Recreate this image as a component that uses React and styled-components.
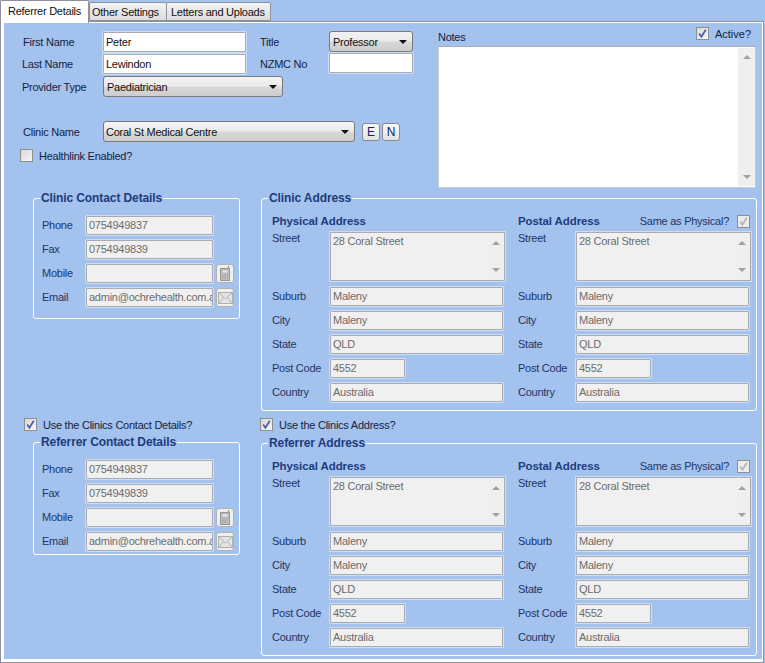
import React from "react";
import styled, { createGlobalStyle, css } from "styled-components";

const Global = createGlobalStyle`
  html, body { margin: 0; padding: 0; background: #a3c2ee; }
  body { width: 765px; height: 663px; overflow: hidden; font: 11px/14px "Liberation Sans", Arial, sans-serif; letter-spacing: -0.25px; color: #10203f; }
  * { box-sizing: border-box; }
`;

const Window = styled.div`width: 765px; height: 663px; display: flex; flex-direction: column;`;
const TabStrip = styled.div`display: flex; align-items: flex-end; height: 21px; flex: none;`;
const Tab = styled.div`
  position: relative;
  height: ${p => (p.$active ? "23px" : "19px")};
  margin-bottom: ${p => (p.$active ? "-2px" : "0")};
  width: ${p => p.$w}px;
  margin-right: ${p => (p.$active ? "0" : "-1px")};
  z-index: ${p => (p.$active ? 2 : 0)};
  padding: ${p => (p.$active ? "3px" : "2px")} 0 0 ${p => p.$pl}px;
  border: 1px solid #8e8f9f;
  border-bottom: ${p => (p.$active ? "0" : "1px solid #8e8f9f")};
  border-radius: 2px 2px 0 0;
  background: ${p => (p.$active ? "#fff" : "linear-gradient(#f3f3f3, #dcdcdc)")};
  color: #101010;
  white-space: nowrap;
`;
const Panel = styled.div`
  flex: none; width: 764px; height: 642px;
  border: 1px solid #8e8f9f;
  background: #fff;
  padding: 1px 2px 2px 3px;
`;
const Content = styled.div`
  width: 758px; height: 636px; background: #a3c2ee; display: flex; flex-direction: column;
`;
const Top = styled.div`display: flex; height: 175px; flex: none;`;
const TopLeft = styled.div`width: 434px; padding: 8px 0 0 18px; flex: none;`;
const TopRight = styled.div`width: 318px; padding-top: 4px; flex: none;`;
const FormRow = styled.div`
  display: flex; align-items: flex-end; height: 21px; margin-top: ${p => p.$mt || 0}px;
`;
const Caption = styled.div`
  width: ${p => p.$w}px; flex: none; padding-left: ${p => p.$pl || 0}px; align-self: center; color: #15233f; white-space: nowrap;
`;
const boxBase = css`
  border: 1px solid #a9abb3;
  box-shadow: 0 0 0 1px rgba(255,255,255,.45);
  padding: 0 2px; white-space: nowrap; overflow: hidden; display: flex; align-items: center;
  border-radius: 1px;
`;
const TextBox = styled.div`
  ${boxBase}
  width: ${p => p.$w}px; height: 20px; background: #fff; color: #111;
  align-self: ${p => p.$align || "flex-end"};
`;
const Combo = styled.div`
  display: flex; align-items: center; justify-content: space-between;
  width: ${p => p.$w}px; height: 21px; padding: 0 5px 0 ${p => p.$pl || 3}px;
  border: 1px solid #7a7a7a; border-radius: 3px; color: #111;
  background: linear-gradient(#f3f3f3 0%, #ebebeb 48%, #d8d8d8 52%, #cdcdcd 100%);
  flex: none;
`;
const Arrow = styled.span`
  width: 0; height: 0; border-left: 4px solid transparent; border-right: 4px solid transparent; border-top: 4px solid #111;
`;
const SmallBtn = styled.div`
  width: 18px; height: 18px; margin-left: ${p => p.$ml}px; margin-bottom: 1px;
  display: flex; align-items: center; justify-content: center; flex: none;
  border: 1px solid #8a8a8a; border-radius: 3px; color: #15235f; font-size: 12px;
  background: linear-gradient(#f8f8f8, #e2e2e2);
`;
const CheckRow = styled.div`
  display: flex; align-items: center; height: 13px;
  margin: ${p => p.$m || "0"};
  gap: 6px; color: #15233f; white-space: nowrap;
  letter-spacing: ${p => p.$ls ?? -0.25}px;
`;
const CheckBoxEl = styled.span`
  width: 13px; height: 13px; flex: none; border: 1px solid #8e8f8f; display: flex; align-items: center; justify-content: center;
  background: ${p => (p.$disabled ? "#ececec" : "linear-gradient(135deg, #d8d8d8, #f6f6f6)")};
`;
const Check = ({ checked, disabled }) => (
  <CheckBoxEl $disabled={disabled}>
    {checked && (
      <svg width="11" height="11" viewBox="0 0 11 11">
        <path d="M2.2 5.6 L4.4 8.8 L8.8 1.8" fill="none" stroke={disabled ? "#b4b4b4" : "#4a5ca8"} strokeWidth="1.7" />
      </svg>
    )}
  </CheckBoxEl>
);
const NotesHead = styled.div`display: flex; justify-content: space-between; height: 19px; padding-right: 5px;`;
const NotesLabel = styled.div`padding-top: 3px; color: #15233f;`;
const ScrollBar = styled.div`
  width: 17px; flex: none; align-self: stretch; margin: 1px 0 1px auto; background: #efefef;
  display: flex; flex-direction: column; justify-content: space-between; align-items: center; padding: 7px 0 7px;
`;
const Tri = styled.span`
  width: 0; height: 0; border-left: 4px solid transparent; border-right: 4px solid transparent;
  ${p => (p.$up ? "border-bottom: 4px solid #a0a0a0;" : "border-top: 4px solid #a0a0a0;")}
`;
const NotesBox = styled.div`
  width: 318px; height: 142px; background: #fff; border: 1px solid #c6cbd4; display: flex; border-top-color: #a9abb3;
`;
const Main = styled.div`
  display: grid; grid-template-columns: 207px 496px; column-gap: 21px; padding-left: 29px;
  grid-template-rows: 213px 32px 213px;
`;
const Group = styled.div`
  position: relative; height: ${p => p.$h}px; align-self: start;
  margin-top: ${p => p.$mt || 0}px;
  border: 1px solid #fff; border-radius: 3px;
`;
const Legend = styled.div`
  position: absolute; top: -8px; left: 6px; padding: 0 1px; background: #a3c2ee;
  font-size: 12px; letter-spacing: -0.1px;
  font-weight: 700; color: #1e3c7c; white-space: nowrap;
`;
const ContactBody = styled.div`padding: 17px 0 0 8px; display: flex; flex-direction: column; gap: 5px;`;
const Line = styled.div`display: flex; align-items: center; height: ${p => p.$h || 19}px;`;
const FieldLabel = styled.div`
  width: ${p => p.$w}px; flex: none; color: #1e3564; white-space: nowrap;
  align-self: ${p => (p.$top ? "flex-start" : "center")};
  margin-top: ${p => (p.$top ? "-1px" : "0")};
  margin-bottom: ${p => (p.$top ? "0" : "2px")};
`;
const Disabled = styled.div`
  ${boxBase}
  width: ${p => p.$w}px; height: 19px; background: #f0f0f0; color: #6c6c6c; flex: none;
  padding-bottom: 2px;
`;
const IconBtn = styled.div`
  width: 18px; height: 19px; margin-left: 3px; flex: none; display: flex; align-items: center; justify-content: center;
  border: 1px solid #b2b2b2; border-radius: 3px; background: #f0f0f0;
`;
const AddressBody = styled.div`display: grid; grid-template-columns: 246px 232px; padding: 14px 0 0 10px;`;
const AddressCol = styled.div`display: flex; flex-direction: column;`;
const Head = styled.div`display: flex; align-items: flex-start; height: 19px;`;
const HeadTitle = styled.div`
  font-weight: 700; font-size: 11.5px; letter-spacing: -0.1px; color: #1e3c7c; white-space: nowrap; padding-top: 1px;
`;
const Same = styled.div`
  margin-left: auto; display: flex; align-items: center; gap: 8px; color: #1e3564; white-space: nowrap; padding-top: 1px;
`;
const AreaBox = styled.div`
  width: 175px; height: 49px; flex: none; background: #f0f0f0; color: #6c6c6c; display: flex;
  border: 1px solid #a9abb3; box-shadow: 0 0 0 1px rgba(255,255,255,.45);
  padding-left: 2px;
`;
const AreaText = styled.div`padding-top: 1px; white-space: nowrap;`;
const Fields = styled.div`display: flex; flex-direction: column; gap: 5px; margin-top: 6px;`;

const PhoneIcon = () => (
  <svg width="12" height="15" viewBox="0 0 12 15">
    <path d="M9.5 0 V3" stroke="#9a9a9a" strokeWidth="1.4" fill="none" />
    <rect x="1.5" y="2.5" width="9" height="12" fill="#c4c4c4" stroke="#969696" />
    <rect x="3" y="4" width="6" height="3" fill="#e6e6e6" stroke="#9c9c9c" strokeWidth="0.5" />
    <path d="M3 9h1.5M5.5 9H7M8 9h1M3 10.8h1.5M5.5 10.8H7M8 10.8h1M3 12.6h1.5M5.5 12.6H7M8 12.6h1" stroke="#8e8e8e" strokeWidth="0.9" />
  </svg>
);
const MailIcon = () => (
  <svg width="15" height="12" viewBox="0 0 15 12">
    <rect x="0.5" y="0.5" width="14" height="11" fill="#e4e4e4" stroke="#b0b0b0" />
    <path d="M0.8 0.8 L7.5 7 L14.2 0.8 M0.8 11.2 L5.5 5.5 M14.2 11.2 L9.5 5.5" fill="none" stroke="#b0b0b0" />
  </svg>
);

const Contact = ({ title, h, mt }) => (
  <Group $h={h} $mt={mt}>
    <Legend>{title}</Legend>
    <ContactBody>
      <Line><FieldLabel $w={44}>Phone</FieldLabel><Disabled $w={127}>0754949837</Disabled></Line>
      <Line><FieldLabel $w={44}>Fax</FieldLabel><Disabled $w={127}>0754949839</Disabled></Line>
      <Line><FieldLabel $w={44}>Mobile</FieldLabel><Disabled $w={127} /><IconBtn><PhoneIcon /></IconBtn></Line>
      <Line><FieldLabel $w={44}>Email</FieldLabel><Disabled $w={127}>admin@ochrehealth.com.au</Disabled><IconBtn><MailIcon /></IconBtn></Line>
    </ContactBody>
  </Group>
);

const AddressColumn = ({ title, same }) => (
  <AddressCol>
    <Head>
      <HeadTitle>{title}</HeadTitle>
      {same && <Same>Same as Physical?<Check checked disabled /></Same>}
    </Head>
    <Line $h={49}>
      <FieldLabel $w={58} $top>Street</FieldLabel>
      <AreaBox>
        <AreaText>28 Coral Street</AreaText>
        <ScrollBar><Tri $up /><Tri /></ScrollBar>
      </AreaBox>
    </Line>
    <Fields>
      <Line><FieldLabel $w={58}>Suburb</FieldLabel><Disabled $w={173}>Maleny</Disabled></Line>
      <Line><FieldLabel $w={58}>City</FieldLabel><Disabled $w={173}>Maleny</Disabled></Line>
      <Line><FieldLabel $w={58}>State</FieldLabel><Disabled $w={173}>QLD</Disabled></Line>
      <Line><FieldLabel $w={58}>Post Code</FieldLabel><Disabled $w={75}>4552</Disabled></Line>
      <Line><FieldLabel $w={58}>Country</FieldLabel><Disabled $w={173}>Australia</Disabled></Line>
    </Fields>
  </AddressCol>
);

const Address = ({ title }) => (
  <Group $h={213}>
    <Legend>{title}</Legend>
    <AddressBody>
      <AddressColumn title="Physical Address" />
      <AddressColumn title="Postal Address" same />
    </AddressBody>
  </Group>
);

export default function App() {
  return (
    <Window>
      <Global />
      <TabStrip>
        <Tab $active $w={89} $pl={7}>Referrer Details</Tab>
        <Tab $w={78} $pl={2}>Other Settings</Tab>
        <Tab $w={105} $pl={4}>Letters and Uploads</Tab>
      </TabStrip>
      <Panel>
        <Content>
          <Top>
            <TopLeft>
              <FormRow>
                <Caption $w={81} $pl={1}>First Name</Caption>
                <TextBox $w={143}>Peter</TextBox>
                <Caption $w={83} $pl={14}>Title</Caption>
                <Combo $w={84}>Professor<Arrow /></Combo>
              </FormRow>
              <FormRow $mt={1}>
                <Caption $w={81}>Last Name</Caption>
                <TextBox $w={143}>Lewindon</TextBox>
                <Caption $w={83} $pl={14}>NZMC No</Caption>
                <TextBox $w={84} $align="flex-start" />
              </FormRow>
              <FormRow $mt={2}>
                <Caption $w={81}>Provider Type</Caption>
                <Combo $w={180}>Paediatrician<Arrow /></Combo>
              </FormRow>
              <FormRow $mt={24}>
                <Caption $w={81} $pl={1}>Clinic Name</Caption>
                <Combo $w={252} $pl={2}>Coral St Medical Centre<Arrow /></Combo>
                <SmallBtn $ml={7}>E</SmallBtn>
                <SmallBtn $ml={2}>N</SmallBtn>
              </FormRow>
              <CheckRow $m="7px 0 0 -2px"><Check />Healthlink Enabled?</CheckRow>
            </TopLeft>
            <TopRight>
              <NotesHead>
                <NotesLabel>Notes</NotesLabel>
                <CheckRow $ls={0}><Check checked />Active?</CheckRow>
              </NotesHead>
              <NotesBox><ScrollBar><Tri $up /><Tri /></ScrollBar></NotesBox>
            </TopRight>
          </Top>
          <Main>
            <Contact title="Clinic Contact Details" h={121} />
            <Address title="Clinic Address" />
            <CheckRow $m="7px 0 0 -9px"><Check checked />Use the Clinics Contact Details?</CheckRow>
            <CheckRow $m="7px 0 0 -1px"><Check checked />Use the Clinics Address?</CheckRow>
            <Contact title="Referrer Contact Details" h={113} mt={-1} />
            <Address title="Referrer Address" />
          </Main>
        </Content>
      </Panel>
    </Window>
  );
}
